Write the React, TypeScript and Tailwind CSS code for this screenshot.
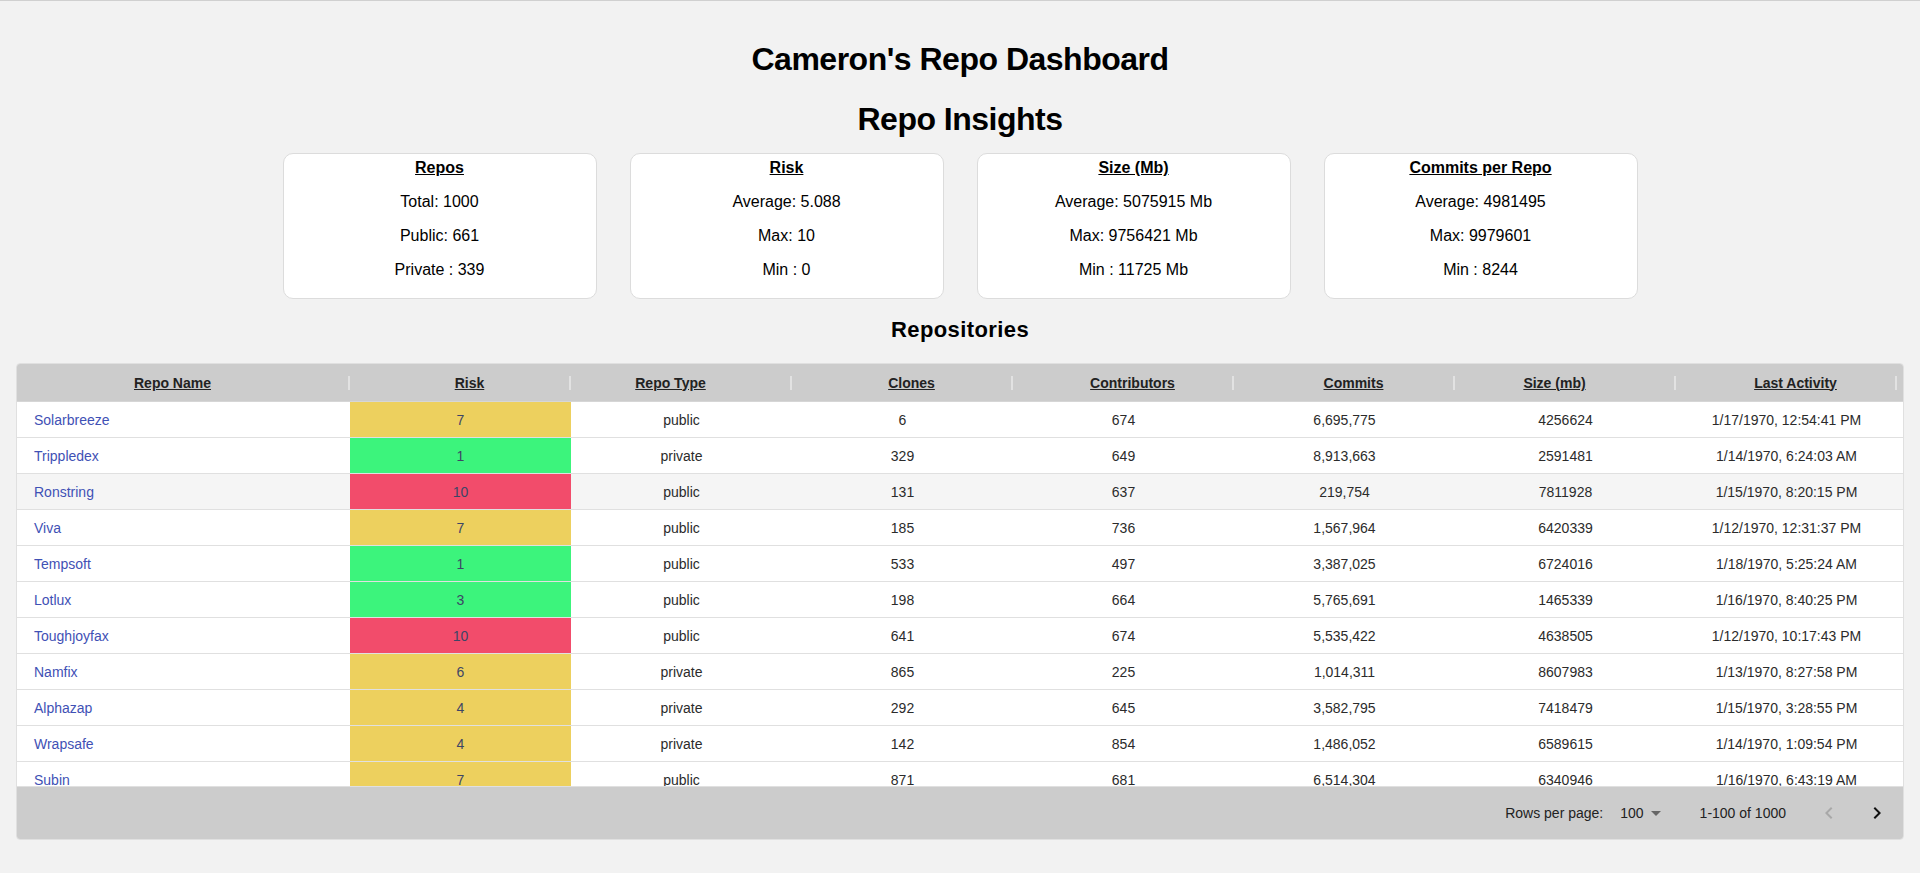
import React from 'react';

type Repo = {
  name: string;
  risk: number;
  type: string;
  clones: number;
  contributors: number;
  commits: string;
  size: number;
  last: string;
};

const REPOS: Repo[] = [
  { name: 'Solarbreeze', risk: 7, type: 'public', clones: 6, contributors: 674, commits: '6,695,775', size: 4256624, last: '1/17/1970, 12:54:41 PM' },
  { name: 'Trippledex', risk: 1, type: 'private', clones: 329, contributors: 649, commits: '8,913,663', size: 2591481, last: '1/14/1970, 6:24:03 AM' },
  { name: 'Ronstring', risk: 10, type: 'public', clones: 131, contributors: 637, commits: '219,754', size: 7811928, last: '1/15/1970, 8:20:15 PM' },
  { name: 'Viva', risk: 7, type: 'public', clones: 185, contributors: 736, commits: '1,567,964', size: 6420339, last: '1/12/1970, 12:31:37 PM' },
  { name: 'Tempsoft', risk: 1, type: 'public', clones: 533, contributors: 497, commits: '3,387,025', size: 6724016, last: '1/18/1970, 5:25:24 AM' },
  { name: 'Lotlux', risk: 3, type: 'public', clones: 198, contributors: 664, commits: '5,765,691', size: 1465339, last: '1/16/1970, 8:40:25 PM' },
  { name: 'Toughjoyfax', risk: 10, type: 'public', clones: 641, contributors: 674, commits: '5,535,422', size: 4638505, last: '1/12/1970, 10:17:43 PM' },
  { name: 'Namfix', risk: 6, type: 'private', clones: 865, contributors: 225, commits: '1,014,311', size: 8607983, last: '1/13/1970, 8:27:58 PM' },
  { name: 'Alphazap', risk: 4, type: 'private', clones: 292, contributors: 645, commits: '3,582,795', size: 7418479, last: '1/15/1970, 3:28:55 PM' },
  { name: 'Wrapsafe', risk: 4, type: 'private', clones: 142, contributors: 854, commits: '1,486,052', size: 6589615, last: '1/14/1970, 1:09:54 PM' },
  { name: 'Subin', risk: 7, type: 'public', clones: 871, contributors: 681, commits: '6,514,304', size: 6340946, last: '1/16/1970, 6:43:19 AM' },
];

const COLUMNS = [
  { label: 'Repo Name', pad: 'pr-[20px]' },
  { label: 'Risk', pad: 'pl-[20px]' },
  { label: 'Repo Type', pad: 'pr-[20px]' },
  { label: 'Clones', pad: 'pl-[20px]' },
  { label: 'Contributors', pad: 'pl-[20px]' },
  { label: 'Commits', pad: 'pl-[20px]' },
  { label: 'Size (mb)', pad: 'pr-[20px]' },
  { label: 'Last Activity', pad: 'pl-[20px]' },
];

const INSIGHTS = [
  { title: 'Repos', lines: ['Total: 1000', 'Public: 661', 'Private : 339'] },
  { title: 'Risk', lines: ['Average: 5.088', 'Max: 10', 'Min : 0'] },
  { title: 'Size (Mb)', lines: ['Average: 5075915 Mb', 'Max: 9756421 Mb', 'Min : 11725 Mb'] },
  { title: 'Commits per Repo', lines: ['Average: 4981495', 'Max: 9979601', 'Min : 8244'] },
];

function riskClass(r: number) {
  if (r <= 3) return 'bg-[#3cf47c]';
  if (r <= 7) return 'bg-[#edd05e]';
  return 'bg-[#f24c6b]';
}

function InsightCard({ title, lines }: { title: string; lines: string[] }) {
  return (
    <div className="w-[314px] bg-white border border-[#dcdcdc] rounded-[10px] pt-[4px] pb-[18px] flex flex-col items-center gap-[14px] text-[16px] leading-[20px] text-black">
      <div className="font-bold underline">{title}</div>
      {lines.map((l) => (
        <div key={l}>{l}</div>
      ))}
    </div>
  );
}

export default function App() {
  return (
    <div className="min-h-[873px] bg-[#f2f2f2] border-t border-[#d0d0d0] font-['Liberation_Sans',Arial,sans-serif] text-black">
      <h1 className="mt-[38px] text-center text-[32px] leading-[40px] font-bold tracking-[-0.5px]">Cameron's Repo Dashboard</h1>
      <h2 className="mt-[20px] text-center text-[32px] leading-[40px] font-bold tracking-[-0.5px]">Repo Insights</h2>

      <div className="mt-[14px] flex justify-center gap-[33px]">
        {INSIGHTS.map((c) => (
          <InsightCard key={c.title} title={c.title} lines={c.lines} />
        ))}
      </div>

      <h3 className="mt-[17px] text-center text-[22px] leading-[28px] font-bold tracking-[0.4px]">Repositories</h3>

      <div className="mt-[19px] mx-4 border border-[#e0e0e0] rounded-[4px] overflow-hidden bg-white text-[14px]">
        {/* header */}
        <div className="grid grid-cols-[333px_repeat(7,221px)] h-[38px] pt-px bg-[#cccccc] border-b border-[#d6d6d6]">
          {COLUMNS.map((c) => (
            <div key={c.label} className="flex items-center h-full">
              <span className={`flex-1 text-center font-bold underline text-[#222] ${c.pad}`}>{c.label}</span>
              <span className="w-[2px] h-[14px] bg-[#e2e2e2]" />
            </div>
          ))}
        </div>

        {/* body */}
        <div className="h-[384px] overflow-hidden">
          {REPOS.map((r, i) => (
            <div
              key={r.name}
              className={`grid grid-cols-[333px_repeat(7,221px)] h-[36px] pt-[2px] border-b border-[#e0e0e0] text-[#2b2b2b] ${i === 2 ? 'bg-[#f5f5f5]' : 'bg-white'}`}
            >
              <div className="flex items-center pl-[17px] text-[#3f51b5]">{r.name}</div>
              <div className={`-mt-[2px] flex items-center justify-center pt-[2px] text-[#3d4566] ${riskClass(r.risk)}`}>{r.risk}</div>
              <div className="flex items-center justify-center">{r.type}</div>
              <div className="flex items-center justify-center">{r.clones}</div>
              <div className="flex items-center justify-center">{r.contributors}</div>
              <div className="flex items-center justify-center">{r.commits}</div>
              <div className="flex items-center justify-center">{r.size}</div>
              <div className="flex items-center justify-center">{r.last}</div>
            </div>
          ))}
        </div>

        {/* footer */}
        <div className="h-[53px] bg-[#cccccc] border-t border-[#e0e0e0] flex items-center justify-end pr-[2px] text-[#222]">
          <span>Rows per page:</span>
          <div className="ml-[17px] flex items-center">
            <span>100</span>
            <svg width="24" height="24" viewBox="0 0 24 24" className="fill-[#666]">
              <path d="M7 10l5 5 5-5z" />
            </svg>
          </div>
          <span className="ml-[32px]">1-100 of 1000</span>
          <div className="ml-[19px] flex items-center">
            <button className="w-[48px] h-[48px] flex items-center justify-center">
              <svg width="24" height="24" viewBox="0 0 24 24" className="fill-[#a8a8a8]">
                <path d="M15.41 16.59L10.83 12l4.58-4.59L14 6l-6 6 6 6 1.41-1.41z" />
              </svg>
            </button>
            <button className="w-[48px] h-[48px] flex items-center justify-center">
              <svg width="24" height="24" viewBox="0 0 24 24" className="fill-[#111]">
                <path d="M8.59 16.59L13.17 12 8.59 7.41 10 6l6 6-6 6-1.41-1.41z" />
              </svg>
            </button>
          </div>
        </div>
      </div>
    </div>
  );
}
